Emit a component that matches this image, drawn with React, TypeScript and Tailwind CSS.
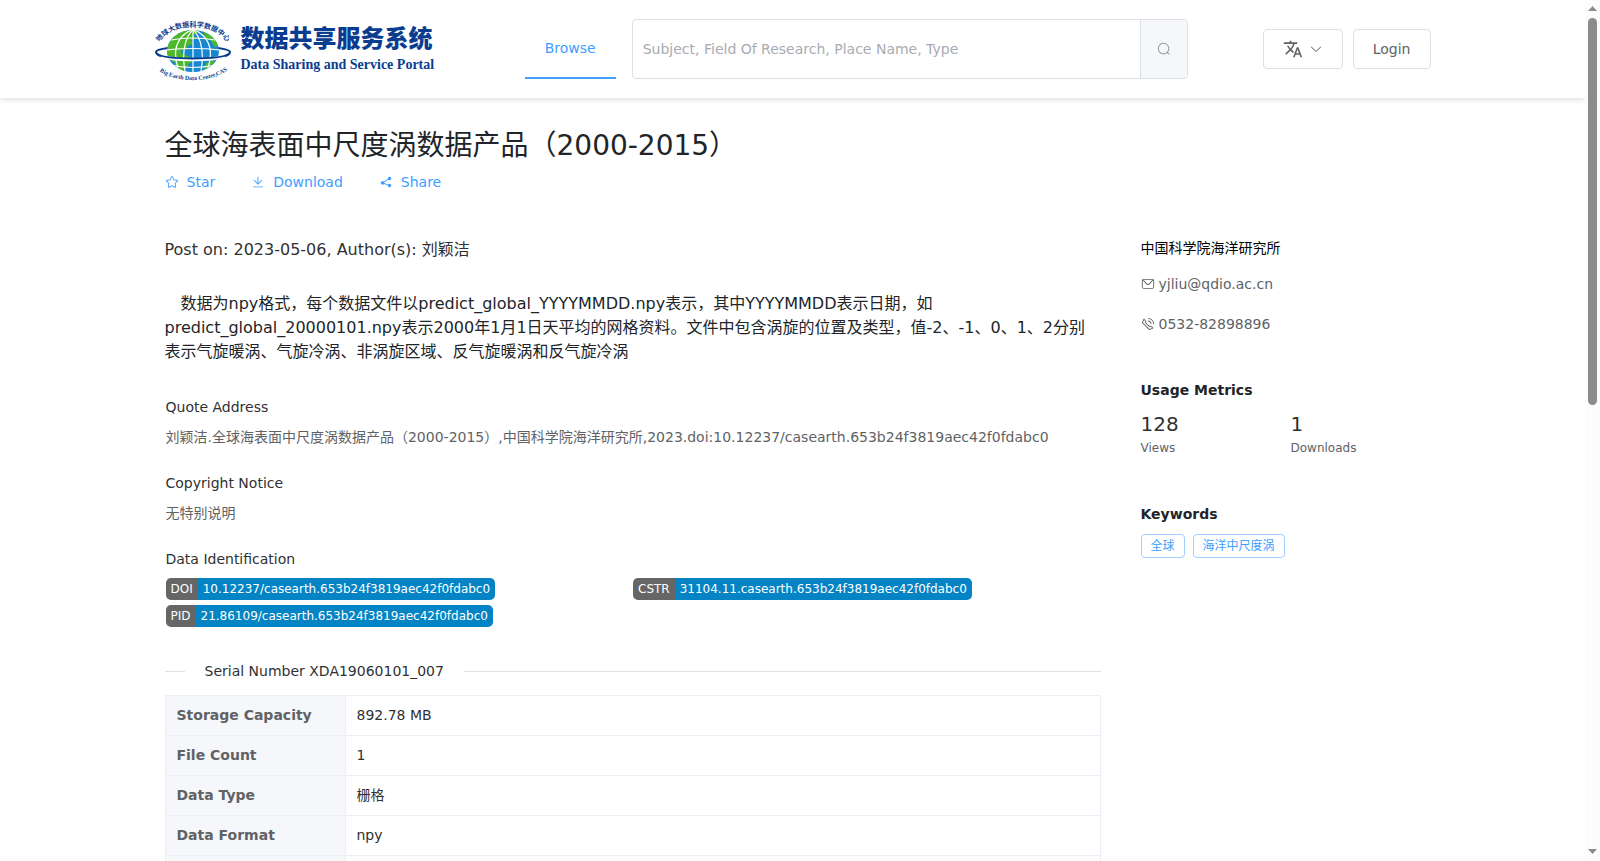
import type { ReactNode } from 'react'
import { MdTranslate } from 'react-icons/md'

const ICONS = {
  search:
    'm795.904 750.72 124.992 124.928a32 32 0 0 1-45.248 45.248L750.656 795.904a416 416 0 1 1 45.248-45.248zM480 832a352 352 0 1 0 0-704 352 352 0 0 0 0 704z',
  arrowDown:
    'M831.872 340.864 512 652.672 192.128 340.864a30.592 30.592 0 0 0-42.752 0 29.12 29.12 0 0 0 0 41.6L489.664 714.24a32 32 0 0 0 44.672 0l340.288-331.712a29.12 29.12 0 0 0 0-41.728 30.592 30.592 0 0 0-42.752 0z',
  star: 'm512 747.84 228.16 119.936a6.4 6.4 0 0 0 9.28-6.72l-43.52-254.08 184.512-179.904a6.4 6.4 0 0 0-3.52-10.88l-255.104-37.12L517.76 147.904a6.4 6.4 0 0 0-11.52 0L392.192 379.072l-255.104 37.12a6.4 6.4 0 0 0-3.52 10.88L318.08 606.976l-43.584 254.08a6.4 6.4 0 0 0 9.28 6.72L512 747.84zM313.6 924.48a70.4 70.4 0 0 1-102.144-74.24l37.888-220.928L88.96 472.96A70.4 70.4 0 0 1 128 352.896l221.76-32.256 99.2-200.96a70.4 70.4 0 0 1 126.208 0l99.2 200.96 221.824 32.256a70.4 70.4 0 0 1 39.04 120.064L774.72 629.376l37.888 220.928a70.4 70.4 0 0 1-102.144 74.24L512 820.096l-198.4 104.32z',
  download:
    'M160 832h704a32 32 0 1 1 0 64H160a32 32 0 1 1 0-64zm384-253.696 236.288-236.352 45.248 45.248L508.8 704 192 387.2l45.248-45.248L480 584.704V128h64v450.304z',
  share:
    'm679.872 348.8-301.76 188.608a127.808 127.808 0 0 1 5.12 52.16l279.936 104.96a128 128 0 1 1-22.464 59.904l-279.872-104.96a128 128 0 1 1-16.64-166.272l301.696-188.608a128 128 0 1 1 33.92 54.272z',
  message:
    'M128 224v512a64 64 0 0 0 64 64h640a64 64 0 0 0 64-64V224H128zm0-64h768a64 64 0 0 1 64 64v512a128 128 0 0 1-128 128H192A128 128 0 0 1 64 736V224a64 64 0 0 1 64-64zM904 224 656.512 506.88a192 192 0 0 1-289.024 0L120 224h784zm-698.944 0 210.56 240.704a128 128 0 0 0 192.704 0L818.944 224H205.056z',
  phone:
    'M79.36 432.256 591.744 944.64a32 32 0 0 0 35.2 6.784l253.44-108.544a32 32 0 0 0 9.984-52.032l-153.856-153.92a32 32 0 0 0-36.928-6.016l-69.888 34.944L358.08 394.24l35.008-69.888a32 32 0 0 0-5.952-36.928L233.152 133.568a32 32 0 0 0-52.032 10.048L72.512 397.056a32 32 0 0 0 6.784 35.2zm60.48-29.952 81.536-190.08L325.568 316.48l-24.64 49.216-20.608 41.216 32.576 32.64 271.552 271.552 32.64 32.64 41.216-20.672 49.28-24.576 104.192 104.128-190.08 81.472L139.84 402.304zM512 320v-64a256 256 0 0 1 256 256h-64a192 192 0 0 0-192-192zm0-192V64a448 448 0 0 1 448 448h-64a384 384 0 0 0-384-384z',
}

const ROWS = [
  ['Storage Capacity', '892.78 MB'],
  ['File Count', '1'],
  ['Data Type', '栅格'],
  ['Data Format', 'npy'],
  ['', ''],
]

function Icon({ name }: { name: keyof typeof ICONS }) {
  return (
    <svg viewBox="0 0 1024 1024" className="w-3.5 h-3.5 shrink-0" fill="currentColor" fillRule="evenodd" aria-hidden="true">
      <path d={ICONS[name]} />
    </svg>
  )
}

function Globe() {
  return (
    <svg viewBox="0 0 80 66" className="w-20 h-[66px] shrink-0" aria-hidden="true">
      <defs>
        <clipPath id="globe">
          <ellipse cx="40" cy="35" rx="26" ry="21" />
        </clipPath>
        <path id="arc-top" d="M5 28 C18 5 62 5 75 28" />
        <path id="arc-bottom" d="M4 53 C20 68 60 68 77 52" />
      </defs>
      <path d="M15 32 C7 33 3 34 3 36 C3 41 20 44 40 44 C60 44 77 41 77 36 C77 34 72 33 65 32" fill="none" stroke="#0a3d8f" strokeWidth="2.200" />
      <ellipse cx="40" cy="35" rx="26" ry="21" fill="#1787d2" />
      <g clipPath="url(#globe)">
        <path d="M14 12H44L46 16 40 19 43 23 38 24 40 28 34 30 35 33 27 35 30 38 37 41 39 45 34 50 30 57H26L22 47 16 42 12 34Z" fill="#4db82c" />
        <path d="M50 13L60 18 67 29 62 31 57 24 52 22Z" fill="#4db82c" />
        <path d="M53 47L62 44 58 52 51 54Z" fill="#4db82c" />
        <g fill="none" stroke="#ffffff" strokeWidth="1.200">
          <path d="M18 24Q40 20 62 24M13 34Q40 31 67 34M18 49Q40 54 62 49" />
          <path d="M40 13V57M40 13Q16 24 25 52M40 13Q64 24 55 52M40 13Q27 28 32 55M40 13Q53 28 48 55" />
        </g>
      </g>
      <path d="M8 40 C22 45 58 45 72 40" fill="none" stroke="#ffffff" strokeWidth="3" />
      <path d="M4 38 C14 44 66 44 76 38" fill="none" stroke="#0a3d8f" strokeWidth="2" />
      <text className="text-[7px] font-bold" fill="#0a3d8f">
        <textPath href="#arc-top" startOffset="50%" textAnchor="middle">地球大数据科学数据中心</textPath>
      </text>
      <text className="font-['Liberation_Serif',serif] text-[6px] font-bold" fill="#0a3d8f">
        <textPath href="#arc-bottom" startOffset="50%" textAnchor="middle">Big Earth Data Center,CAS</textPath>
      </text>
    </svg>
  )
}

function ActionLink({ icon, children }: { icon: keyof typeof ICONS; children: ReactNode }) {
  return (
    <button type="button" className="flex items-center gap-2 text-sm text-[#409eff]">
      <Icon name={icon} />
      {children}
    </button>
  )
}

function IdBadge({ label, value }: { label: string; value: string }) {
  return (
    <a href="#" className="flex w-fit h-[22px] items-center rounded-[5px] overflow-hidden text-xs leading-[22px] text-white">
      <span className="bg-[#666666] px-[5px]">{label}</span>
      <span className="bg-[#0484c4] px-[5px]">{value}</span>
    </a>
  )
}

function Section({ title, children }: { title: string; children: ReactNode }) {
  return (
    <section className="mb-6 pl-px">
      <h2 className="text-sm leading-[22px] text-[#303133] mb-2">{title}</h2>
      <div className="text-sm leading-[22px] text-[#606266]">{children}</div>
    </section>
  )
}

function Header() {
  return (
    <header className="shadow-[0_1px_6px_rgba(0,0,0,0.16)]">
      <div className="mx-auto max-w-[1280px] h-[98px] pr-0.5 flex items-center">
        <a href="#" className="flex items-center gap-2 text-[#0a3d8f]">
          <Globe />
          <span className="flex flex-col whitespace-nowrap pt-1">
            <span className="text-2xl leading-7 font-black">数据共享服务系统</span>
            <span className="font-['Liberation_Serif',serif] text-sm leading-6 font-bold">Data Sharing and Service Portal</span>
          </span>
        </a>
        <nav className="ml-auto">
          <a href="#" className="flex h-[60px] items-center px-5 border-b-2 border-[#409eff] text-sm text-[#409eff]">
            Browse
          </a>
        </nav>
        <form className="ml-4 flex h-[60px] w-[556px] rounded border border-[#dcdfe6] overflow-hidden">
          <input
            type="text"
            aria-label="Search"
            placeholder="Subject, Field Of Research, Place Name, Type"
            className="flex-1 min-w-0 px-2.5 text-sm outline-none placeholder:text-[#a8abb2]"
          />
          <button type="button" aria-label="Search" className="w-[47px] flex items-center justify-center border-l border-[#dcdfe6] bg-[#f5f7fa] text-[#909399]">
            <Icon name="search" />
          </button>
        </form>
        <div className="ml-[75px] flex gap-2.5 text-sm text-[#606266]">
          <button type="button" aria-label="Language" className="flex h-10 items-center gap-1.5 rounded border border-[#dcdfe6] px-[19px]">
            <MdTranslate className="w-5 h-5" stroke="currentColor" />
            <Icon name="arrowDown" />
          </button>
          <button type="button" className="h-10 rounded border border-[#dcdfe6] px-[19px]">
            Login
          </button>
        </div>
      </div>
    </header>
  )
}

function Sidebar() {
  return (
    <aside className="w-[320px] shrink-0 pl-7 pr-3 pt-1 text-sm text-[#606266]">
      <p className="leading-5 text-black mb-4">中国科学院海洋研究所</p>
      <p className="flex items-center gap-1 leading-5 mb-5">
        <Icon name="message" />
        yjliu@qdio.ac.cn
      </p>
      <p className="flex items-center gap-1 leading-5 mb-11">
        <Icon name="phone" />
        0532-82898896
      </p>
      <h2 className="font-bold leading-6 text-[#212529] mb-2">Usage Metrics</h2>
      <dl className="grid grid-cols-[150px_1fr] mb-11">
        {[
          ['128', 'Views'],
          ['1', 'Downloads'],
        ].map(([value, label]) => (
          <div key={label} className="flex flex-col-reverse">
            <dt className="text-xs leading-5">{label}</dt>
            <dd className="text-xl leading-7 text-[#303133]">{value}</dd>
          </div>
        ))}
      </dl>
      <h2 className="font-bold leading-6 text-[#212529] mb-2">Keywords</h2>
      <div className="flex gap-2">
        {['全球', '海洋中尺度涡'].map((tag) => (
          <span key={tag} className="h-6 rounded border border-[#a0cfff] px-[9px] text-xs leading-[22px] text-[#409eff]">
            {tag}
          </span>
        ))}
      </div>
    </aside>
  )
}

function Scrollbar() {
  return (
    <div className="w-[15px] shrink-0 flex flex-col items-center bg-[#fcfcfc] text-[#8b8b8b]" aria-hidden="true">
      <svg viewBox="0 0 15 18" className="w-[15px] h-[18px] shrink-0" fill="currentColor">
        <path d="M7.500 6L12 11H3Z" />
      </svg>
      <div className="w-[9px] h-[45%] rounded-full bg-[#8b8b8b]" />
      <svg viewBox="0 0 15 18" className="w-[15px] h-[18px] mt-auto shrink-0" fill="currentColor">
        <path d="M7.500 11L12 6H3Z" />
      </svg>
    </div>
  )
}

export default function App() {
  return (
    <div className="flex h-screen bg-white font-['DejaVu_Sans','Noto_Sans_CJK_SC',sans-serif] text-[#212529]">
      <div className="flex-1 min-w-0 overflow-hidden">
        <Header />
        <main className="mx-auto max-w-[1280px]">
          <div className="px-3 pt-[30px]">
            <h1 className="text-[28px] leading-9">全球海表面中尺度涡数据产品（2000-2015）</h1>
            <div className="mt-2 flex gap-9">
              <ActionLink icon="star">Star</ActionLink>
              <ActionLink icon="download">Download</ActionLink>
              <ActionLink icon="share">Share</ActionLink>
            </div>
          </div>
          <div className="mt-[42px] flex">
            <div className="flex-1 min-w-0 px-3">
              <p className="leading-6 text-[#303133] mb-[30px] pt-1">Post on: 2023-05-06, Author(s): 刘颖洁</p>
              <p className="leading-6 indent-4 mb-8">
                数据为npy格式，每个数据文件以predict_global_YYYYMMDD.npy表示，其中YYYYMMDD表示日期，如predict_global_20000101.npy表示2000年1月1日天平均的网格资料。文件中包含涡旋的位置及类型，值-2、-1、0、1、2分别表示气旋暖涡、气旋冷涡、非涡旋区域、反气旋暖涡和反气旋冷涡
              </p>
              <Section title="Quote Address">
                刘颖洁.全球海表面中尺度涡数据产品（2000-2015）,中国科学院海洋研究所,2023.doi:10.12237/casearth.653b24f3819aec42f0fdabc0
              </Section>
              <Section title="Copyright Notice">无特别说明</Section>
              <Section title="Data Identification">
                <div className="grid grid-cols-2 gap-y-[5px]">
                  <IdBadge label="DOI" value="10.12237/casearth.653b24f3819aec42f0fdabc0" />
                  <IdBadge label="CSTR" value="31104.11.casearth.653b24f3819aec42f0fdabc0" />
                  <IdBadge label="PID" value="21.86109/casearth.653b24f3819aec42f0fdabc0" />
                </div>
              </Section>
              <div className="mt-8 mb-3 flex items-center gap-5 text-sm leading-6 text-[#303133]">
                <span className="w-5 h-px bg-[#dcdfe6]" />
                Serial Number XDA19060101_007
                <span className="flex-1 h-px bg-[#dcdfe6]" />
              </div>
              <table className="w-full table-fixed border-collapse text-sm leading-[23px] text-[#303133]">
                <tbody>
                  {ROWS.map(([label, value]) => (
                    <tr key={label} className="h-10">
                      <th scope="row" className="w-[180px] border border-[#ebeef5] bg-[#f5f7fa] px-[11px] py-2 text-left font-bold text-[#606266]">
                        {label}
                      </th>
                      <td className="border border-[#ebeef5] px-[11px] py-2">{value}</td>
                    </tr>
                  ))}
                </tbody>
              </table>
            </div>
            <Sidebar />
          </div>
        </main>
      </div>
      <Scrollbar />
    </div>
  )
}
